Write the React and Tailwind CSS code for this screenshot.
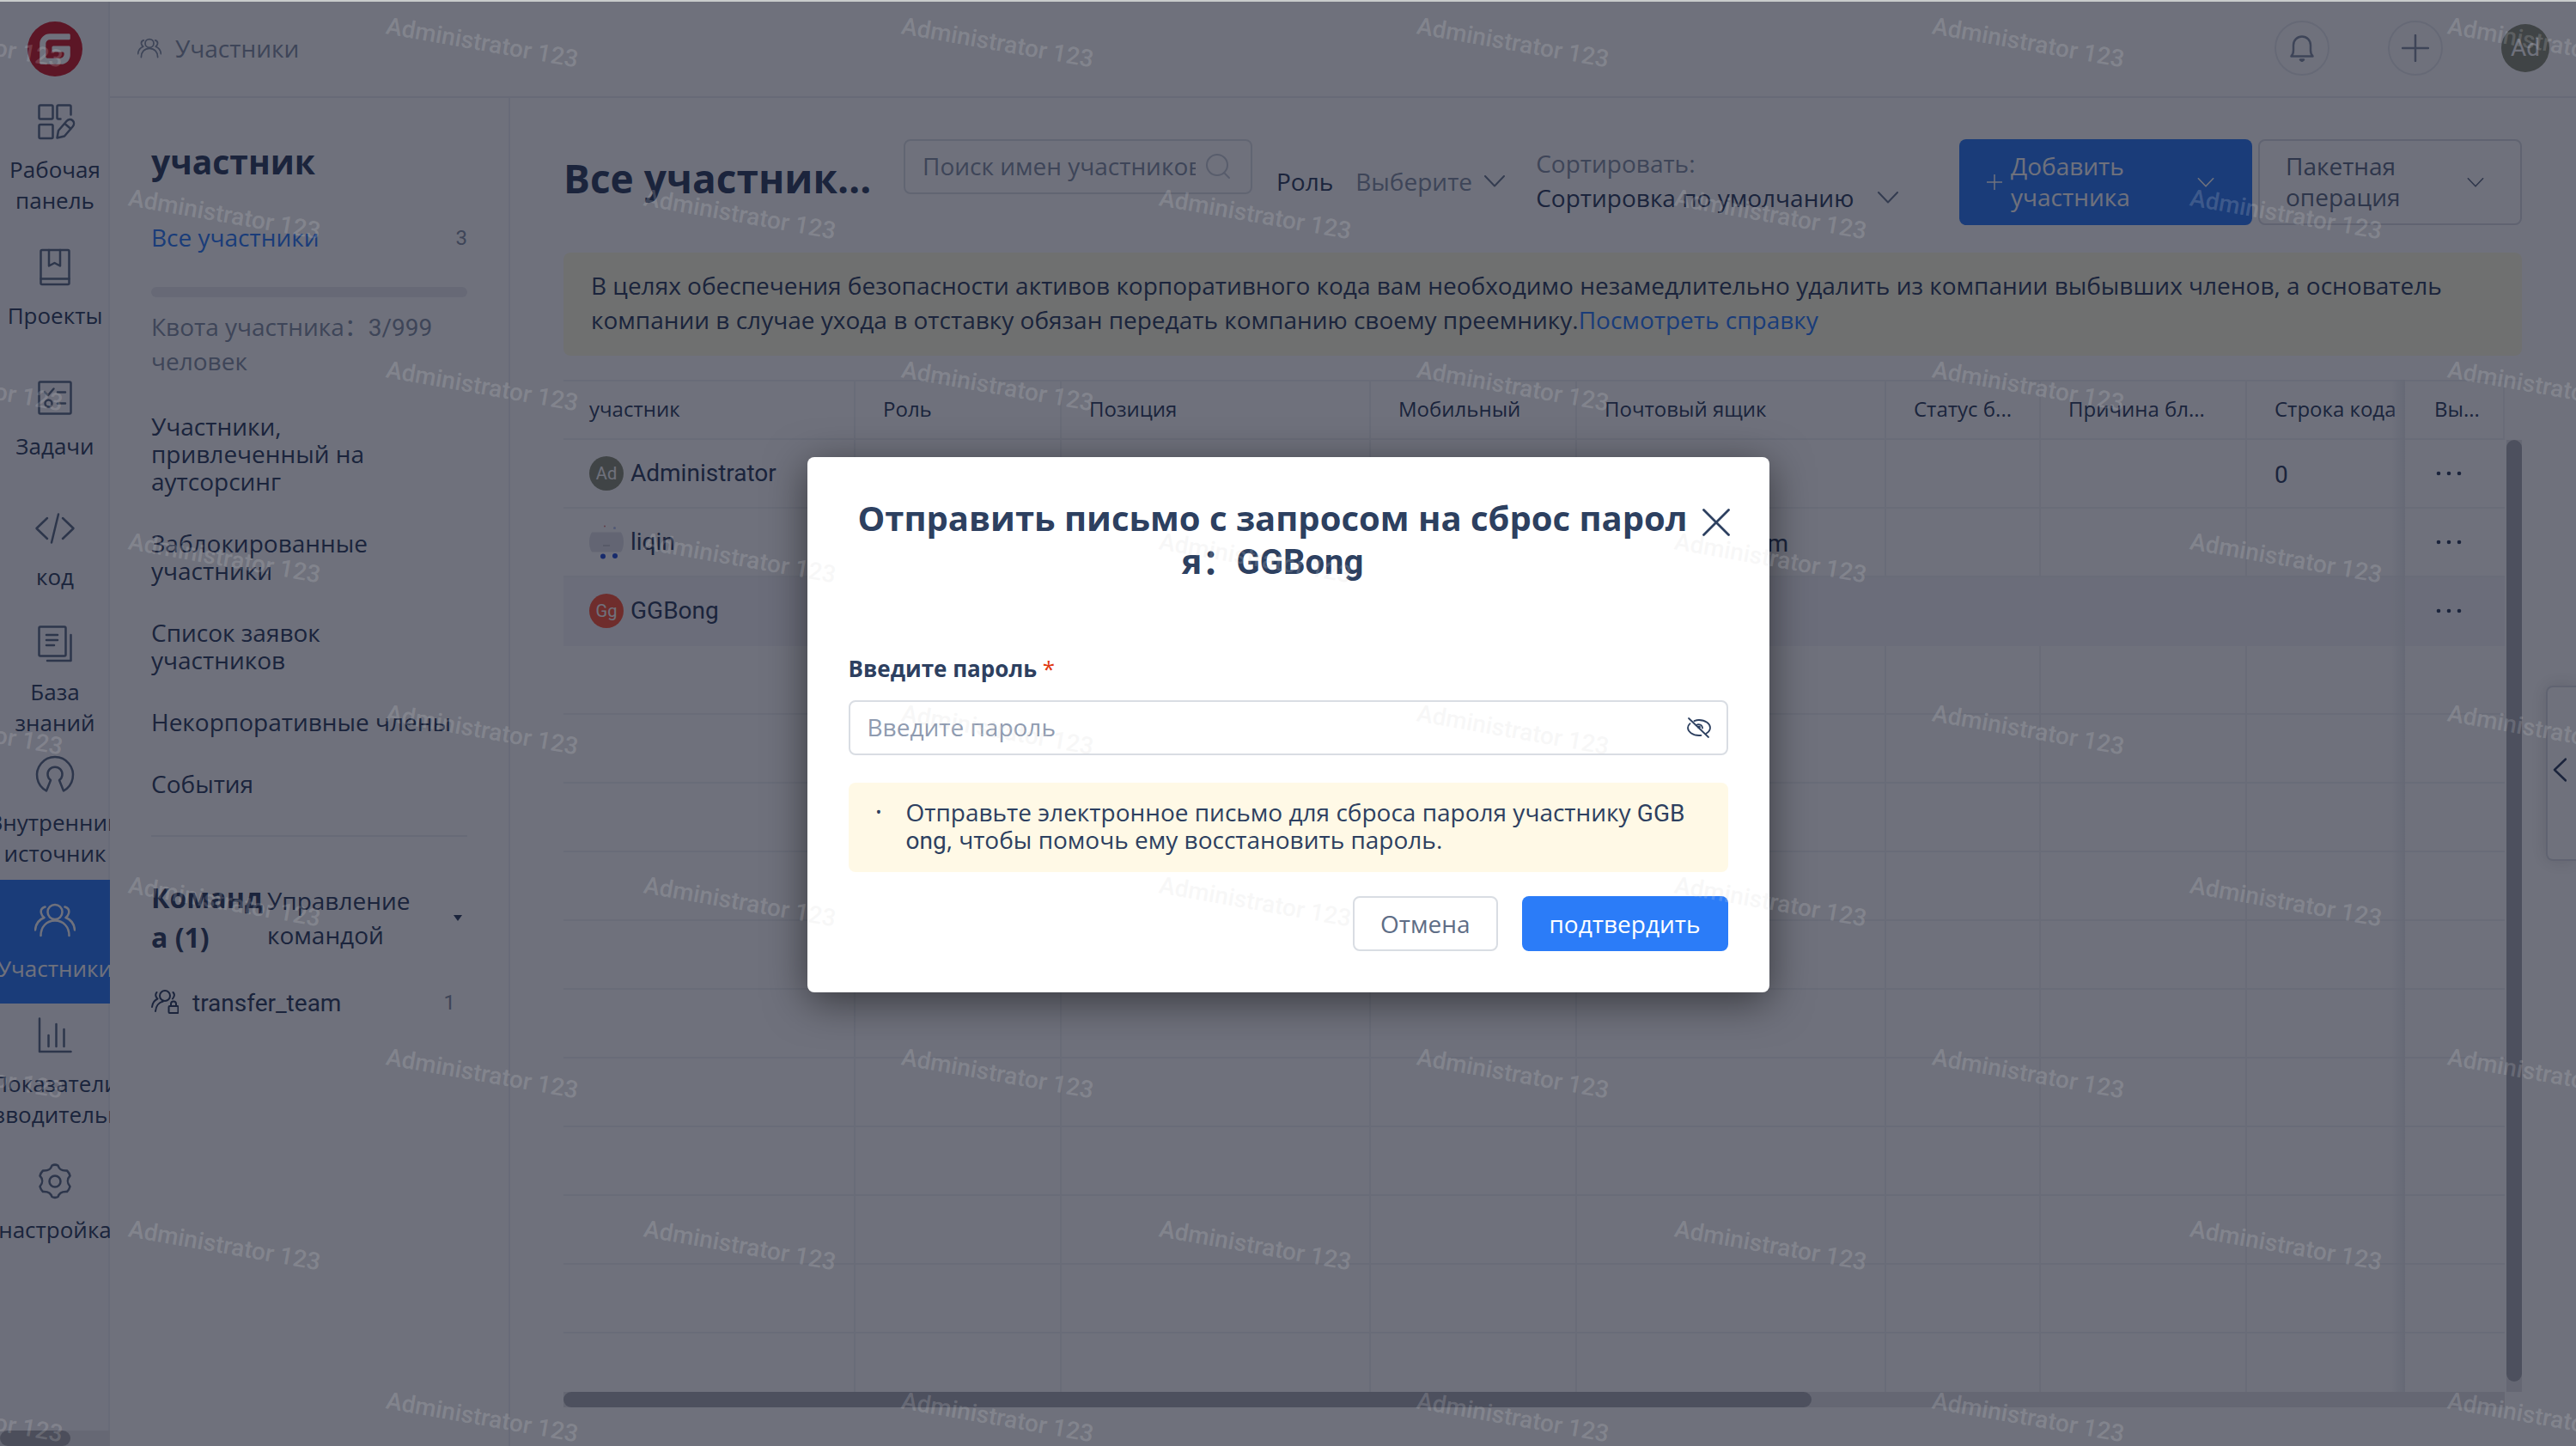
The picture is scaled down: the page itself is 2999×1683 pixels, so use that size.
import React from "react";
import { SiGitee } from "react-icons/si";

const stroke = { fill: "none", stroke: "currentColor", strokeLinecap: "round", strokeLinejoin: "round" };

function Latin({ children }) {
  return <span className="font-['Roboto',sans-serif] leading-none">{children}</span>;
}

/* ---------- icons ---------- */

function WorkspaceIcon() {
  return (
    <svg viewBox="0 0 48 48" className="size-12" {...stroke} strokeWidth="2.5">
      <rect x="5.5" y="5.5" width="16" height="16" rx="1.5" />
      <rect x="5.5" y="28" width="16" height="16" rx="1.5" />
      <path d="M30.500 21.500H28a1.500 1.500 0 0 1-1.500-1.500V7a1.500 1.500 0 0 1 1.500-1.500h13a1.500 1.500 0 0 1 1.500 1.500v9.500" />
      <path d="M26.500 43.500l1.500-8.500 9.500-11c2-2.300 5-2.500 7-.800s2 4.800.200 7l-9.700 11.300-8.500 2zM35.500 27l7 6" />
    </svg>
  );
}

function ProjectIcon() {
  return (
    <svg viewBox="0 0 48 48" className="size-12" {...stroke} strokeWidth="2.5">
      <rect x="7.500" y="4" width="33" height="40" rx="1.500" />
      <path d="M7.500 37.500h33M17 4v18.500l6.500-3.500 6.500 3.500V4" />
    </svg>
  );
}

function TaskIcon() {
  return (
    <svg viewBox="0 0 48 48" className="size-12" {...stroke} strokeWidth="2.5">
      <rect x="5.500" y="5.500" width="37" height="37" rx="1.500" />
      <path d="M12 17l4 4 6.500-7.500M27 17.500h9M27 30.500h9" />
      <circle cx="16.500" cy="30.500" r="4" />
    </svg>
  );
}

function CodeIcon() {
  return (
    <svg viewBox="0 0 48 48" className="size-12" {...stroke} strokeWidth="2.500">
      <path d="M15 12L2.500 24 15 36M33 12l12.500 12L33 36M28 7.500L20 40.500" />
    </svg>
  );
}

function DocsIcon() {
  return (
    <svg viewBox="0 0 48 48" className="size-12" {...stroke} strokeWidth="2.500">
      <rect x="5.500" y="4.500" width="31" height="34" rx="1.500" />
      <path d="M42.500 14v30H15M14 14h13M14 20h13M14 26h9" />
    </svg>
  );
}

function SourceIcon() {
  return (
    <svg viewBox="0 0 48 48" className="size-12" {...stroke} strokeWidth="2.500">
      <path d="M14 43.500A21 21 0 1 1 34 43.500L29 31a8.500 8.500 0 1 0-10 0z" />
    </svg>
  );
}

function MembersIcon({ className = "size-12", width = 2.5 }) {
  return (
    <svg viewBox="0 0 48 48" className={className} {...stroke} strokeWidth={width}>
      <circle cx="24" cy="14.500" r="8.500" />
      <path d="M7.500 42c0-10 6.500-17.500 16.500-17.500S40.500 32 40.500 42" />
      <path d="M12.500 8.500C9 9.500 7 12 8 16c.6 2.500 2 4 3.500 5-6.500 2.500-10 8-10.500 14.500M35.500 8.500c3.500 1 5.500 3.500 4.500 7.500-.6 2.500-2 4-3.500 5 6.500 2.500 10 8 10.500 14.500" />
    </svg>
  );
}

function ChartIcon() {
  return (
    <svg viewBox="0 0 48 48" className="size-12" {...stroke} strokeWidth="2.500">
      <path d="M6 4.500v38.500h36.500M16.500 24v13M25.500 11v26M34.500 17v20" />
    </svg>
  );
}

function GearIcon() {
  return (
    <svg viewBox="0 0 48 48" className="size-12" {...stroke} strokeWidth="2.500">
      <path d="M20.500 5.500c2-1 5-1 7 0 1.500 5 5 6.500 10.500 6 1.500 1.500 3 4 3.500 6-3.500 3.500-3.500 8.500 0 12.500-.5 2-2 4.500-3.500 6-5.500-.5-9 1-10.500 6-2 1-5 1-7 0-1.500-5-5-6.500-10.500-6-1.500-1.500-3-4-3.500-6 3.500-4 3.500-9 0-12.500.5-2 2-4.500 3.500-6 5.500.5 9-1 10.500-6z" />
      <circle cx="24" cy="24" r="6.500" />
    </svg>
  );
}

function Chevron({ className = "w-6 h-[14px]" }) {
  return (
    <svg viewBox="0 0 24 14" className={`${className} shrink-0 pointer-events-none`} {...stroke} strokeWidth="2">
      <path d="M1 1l11 11.500L23 1" />
    </svg>
  );
}

function EyeOffIcon() {
  return (
    <svg viewBox="0 0 28 24" className="w-7 h-6" {...stroke} strokeWidth="1.800">
      <path d="M2 1l23 22M8.500 4.200C10.200 3.500 12 3 14 3c7.500 0 13 4.500 13 9 0 2.500-1.700 4.800-4.300 6.500M16.500 20.800c-.8.100-1.600.2-2.500.2C6.500 21 1 16.500 1 12c0-1.700.9-3.400 2.500-4.900" />
      <path d="M11 9c2.500-2 7-.5 7 3.500M13 11.500a1 1 0 0 1 2 0" />
    </svg>
  );
}

/* ---------- left navigation ---------- */

const NAV = [
  { icon: WorkspaceIcon, lines: ["Рабочая", "панель"] },
  { icon: ProjectIcon, lines: ["Проекты"] },
  { icon: TaskIcon, lines: ["Задачи"] },
  { icon: CodeIcon, lines: ["код"] },
  { icon: DocsIcon, lines: ["База", "знаний"] },
  { icon: SourceIcon, lines: ["Внутренний", "источник"] },
  { icon: MembersIcon, lines: ["Участники"], active: true },
  { icon: ChartIcon, lines: ["Показатели", "производительности"] },
  { icon: GearIcon, lines: ["настройка"] },
];

function NavRail() {
  return (
    <nav className="flex w-32 shrink-0 flex-col overflow-hidden bg-[#fafafc] shadow-[inset_-2px_0_0_#eef0f4]">
      <a href="#home" aria-label="Главная" className="mx-auto mt-[25px] mb-[23px] block size-16 rounded-full bg-white text-[#d01c28]">
        <SiGitee className="size-16" />
      </a>
      <ul className="flex flex-1 flex-col gap-2">
        {NAV.map(({ icon: Icon, lines, active }) => (
          <li key={lines[0]}>
            <a
              href="#nav"
              className={
                active
                  ? "flex h-36 flex-col items-center justify-center gap-[14px] bg-[#2b7cf8] text-white"
                  : "flex h-36 flex-col items-center justify-center gap-[14px] text-[#2d4060]"
              }
            >
              <span className={active ? "text-white" : "text-[#5a6b85]"}>
                <Icon />
              </span>
              <span className="flex flex-col items-center whitespace-nowrap text-[26px] leading-9">
                {lines.map((l) => (
                  <span key={l}>{l}</span>
                ))}
              </span>
            </a>
          </li>
        ))}
      </ul>
      <div className="h-[18px] bg-[#e8e8ea]">
        <div className="h-full w-[82px] rounded-full bg-[#a8a9ad]" />
      </div>
    </nav>
  );
}

/* ---------- header ---------- */

function Header() {
  return (
    <header className="flex h-28 shrink-0 items-center border-b-2 border-[#eceef2] pr-[31px] pl-8 box-content">
      <MembersIcon className="size-7 text-[#8592a6]" width={3} />
      <span className="ml-4 text-[28px] leading-10 text-[#8592a6]">Участники</span>
      <div className="ml-auto flex items-center gap-[68px]">
        <button aria-label="Уведомления" className="flex size-16 items-center justify-center rounded-full border-2 border-[#e9ecf0] text-[#8592a6]">
          <svg viewBox="0 0 32 32" className="size-8" {...stroke} strokeWidth="2.500">
            <path d="M3.500 25.500h25c-2-2-2.500-4-2.500-7v-6a10 10 0 0 0-20 0v6c0 3-.5 5-2.500 7z" />
            <path d="M14 29.500h4l-2 1.500z" fill="currentColor" />
          </svg>
        </button>
        <button aria-label="Создать" className="flex size-16 items-center justify-center rounded-full border-2 border-[#e9ecf0] text-[#8592a6]">
          <svg viewBox="0 0 32 32" className="size-8" {...stroke} strokeWidth="2.500">
            <path d="M16 1v30M1 16h30" />
          </svg>
        </button>
        <button className="flex size-14 items-center justify-center rounded-full bg-[#8b9078] text-[28px] text-white">
          <Latin>Ad</Latin>
        </button>
      </div>
    </header>
  );
}

/* ---------- groups panel ---------- */

function GroupsPanel() {
  return (
    <aside className="flex w-[466px] shrink-0 flex-col border-r-2 border-[#eef0f4] px-12 pt-12">
      <h2 className="text-[39px] leading-[52px] font-bold text-[#2d4060]">участник</h2>
      <a href="#all" className="mt-[42px] flex items-center justify-between leading-10 text-[#2b7cf8]">
        <span className="text-[28px]">Все участники</span>
        <span className="text-2xl text-[#8592a6]">
          <Latin>3</Latin>
        </span>
      </a>
      <div className="mt-[38px] h-3 rounded-full bg-[#eaecf0]" />
      <p className="mt-[14px] text-[28px] leading-10 text-[#8592a6]">
        Квота участника：<Latin>3/999</Latin> человек
      </p>
      <ul className="mt-10 flex flex-col gap-10 text-[28px] leading-8 text-[#2d4060]">
        <li><a href="#o" className="block">Участники,<br />привлеченный на аутсорсинг</a></li>
        <li><a href="#b" className="block">Заблокированные участники</a></li>
        <li><a href="#r" className="block">Список заявок<br />участников</a></li>
        <li><a href="#n" className="block whitespace-nowrap">Некорпоративные члены</a></li>
        <li><a href="#e" className="block">События</a></li>
      </ul>
      <hr className="mt-11 border-t-2 border-[#eceef2]" />
      <div className="mt-12 flex items-center">
        <h3 className="w-[135px] shrink-0 text-[32px] leading-[46px] font-bold break-all text-[#2d4060]">Команда (1)</h3>
        <button className="flex flex-1 items-center justify-between pr-[6px] text-left text-[28px] leading-10 text-[#2d4060]">
          <span className="w-[180px]">Управление командой</span>
          <svg viewBox="0 0 10 7" className="h-[7px] w-[10px]" fill="currentColor">
            <path d="M0 0h10L5 7z" />
          </svg>
        </button>
      </div>
      <a href="#team" className="mt-8 flex items-center text-[#2d4060]">
        <svg viewBox="0 0 32 28" className="h-7 w-8" {...stroke} strokeWidth="2">
          <circle cx="16" cy="7" r="6" />
          <path d="M1 20c.5-4.500 3-8 6.500-9.500C5 8.500 4.500 5 6.500 3M25.500 3c2 2 1.500 5-.5 7.500M5 25c.5-6 4-10.500 9-11.500" />
          <rect x="20.500" y="19" width="11" height="8" rx="1" />
          <path d="M23 19v-2.500a3 3 0 0 1 6 0V19" />
        </svg>
        <span className="ml-4 text-[28px] leading-10"><Latin>transfer_team</Latin></span>
        <span className="mr-[14px] ml-auto text-2xl text-[#8592a6]"><Latin>1</Latin></span>
      </a>
    </aside>
  );
}

/* ---------- members toolbar + table ---------- */

function Toolbar() {
  return (
    <div className="flex items-start">
      <h1 className="w-[364px] shrink-0 truncate pt-[14px] text-[46px] leading-[62px] font-bold text-[#2d4060]">Все участники (3)</h1>
      <label className="ml-8 flex h-16 w-[406px] items-center rounded-lg border-2 border-[#dde1e6] pr-[22px] pl-5">
        <input
          type="text"
          aria-label="Поиск имен участников"
          placeholder="Поиск имен участников"
          className="w-[318px] bg-transparent pb-[2px] text-[28px] leading-10 outline-none placeholder:text-[#8592a6]"
        />
        <svg viewBox="0 0 32 32" className="ml-auto size-8 shrink-0 text-[#c6ccd6]" {...stroke} strokeWidth="2">
          <circle cx="15" cy="14" r="12" />
          <path d="M23 23l6 6" />
        </svg>
      </label>
      <div className="ml-7 flex items-center pt-[29px] text-[28px] leading-10">
        <label htmlFor="role" className="text-[#2d4060]">Роль</label>
        <select id="role" className="ml-[26px] w-[150px] appearance-none bg-transparent text-[#8592a6] outline-none">
          <option>Выберите</option>
        </select>
        <Chevron className="w-6 h-[14px] text-[#6b7b92]" />
      </div>
      <div className="ml-9 flex flex-col pt-2 text-[28px] leading-10">
        <label htmlFor="sort" className="text-[#8592a6]">Сортировать:</label>
        <span className="flex items-center">
          <select id="sort" className="w-[398px] appearance-none bg-transparent text-[#2d4060] outline-none">
            <option>Сортировка по умолчанию</option>
          </select>
          <Chevron className="w-6 h-[14px] text-[#6b7b92]" />
        </span>
      </div>
      <div className="ml-auto flex gap-[7px] text-[28px] leading-9">
        <button className="flex h-[100px] w-[341px] items-center rounded-lg bg-[#2b7cf8] pr-11 pl-8 text-left text-white">
          <svg viewBox="0 0 18 18" className="mr-[10px] size-[18px] shrink-0" {...stroke} strokeWidth="1.500">
            <path d="M9 0v18M0 9h18" />
          </svg>
          <span className="w-40 pb-[2px]">Добавить участника</span>
          <Chevron className="ml-auto h-[11px] w-5" />
        </button>
        <button className="flex h-[100px] w-[307px] items-center rounded-lg border-2 border-[#d9dde3] pr-[42px] pl-[30px] text-left text-[#5e6d86]">
          <span className="w-40 pb-[2px]">Пакетная операция</span>
          <Chevron className="ml-auto h-[11px] w-5" />
        </button>
      </div>
    </div>
  );
}

const MEMBERS = [
  {
    name: "Administrator",
    avatar: <span className="flex size-10 items-center justify-center rounded-full bg-[#8b9078] text-xl text-white"><Latin>Ad</Latin></span>,
    lines: "0",
  },
  {
    name: "liqin",
    mail: "m",
    avatar: (
      <svg viewBox="0 0 40 40" className="size-10">
        <path d="M3 8.500h34c4 6 4 17 0 23H3c-4-6-4-17 0-23z" fill="#e0e2e8" />
        <path d="M16 24h8" stroke="#b9bcc4" strokeWidth="1.500" />
        <circle cx="16" cy="36.500" r="3" fill="#2450d8" />
        <circle cx="30" cy="36" r="3" fill="#2450d8" />
        <circle cx="18" cy="1.500" r="1" fill="#e08080" />
        <circle cx="29.500" cy="3.500" r="1.500" fill="#b5c2f0" />
      </svg>
    ),
  },
  {
    name: "GGBong",
    active: true,
    avatar: <span className="flex size-10 items-center justify-center rounded-full bg-[#ff5538] text-xl text-white"><Latin>Gg</Latin></span>,
  },
];

const HEADS = ["участник", "Роль", "Позиция", "Мобильный", "Почтовый ящик", "Статус б...", "Причина бл...", "Строка кода", "Вы..."];
const WIDTHS = ["w-[340px]", "w-[240px]", "w-[360px]", "w-[240px]", "w-[360px]", "w-[180px]", "w-[240px]", "w-[184px]", "w-[116px]"];

function MembersTable() {
  return (
    <div className="mt-7 flex min-h-0 flex-1">
      <div className="flex min-w-0 flex-1 flex-col">
        <div className="relative min-h-0 flex-1 overflow-hidden">
          <table className="w-full table-fixed border-separate border-spacing-0 text-left">
            <colgroup>
              {WIDTHS.map((w, i) => (
                <col key={i} className={w} />
              ))}
            </colgroup>
            <thead>
              <tr className="h-[70px] text-2xl text-[#2d4060]">
                {HEADS.map((h) => (
                  <th key={h} className="border-t-2 border-r-2 border-b-2 border-[#f1f3f6] p-0 pb-[2px] pl-8 font-normal whitespace-nowrap first:pl-[30px] last:pl-[34px] nth-8:border-r-0">{h}</th>
                ))}
              </tr>
            </thead>
            <tbody className="text-[28px] text-[#2d4060]">
              {MEMBERS.map((m) => (
                <tr key={m.name} className={m.active ? "h-20 bg-[#f5f6f9] [&>td]:border-[#f5f6f9]" : "h-20"}>
                  <td className="border-r-2 border-b-2 border-[#f1f3f6] p-0 pl-[30px]">
                    <span className="flex items-center gap-2">
                      {m.avatar}
                      <Latin>{m.name}</Latin>
                    </span>
                  </td>
                  <td className="border-r-2 border-b-2 border-[#f1f3f6] p-0" />
                  <td className="border-r-2 border-b-2 border-[#f1f3f6] p-0" />
                  <td className="border-r-2 border-b-2 border-[#f1f3f6] p-0" />
                  <td className="border-r-2 border-b-2 border-[#f1f3f6] p-0 pr-28 text-right"><Latin>{m.mail}</Latin></td>
                  <td className="border-r-2 border-b-2 border-[#f1f3f6] p-0" />
                  <td className="border-r-2 border-b-2 border-[#f1f3f6] p-0" />
                  <td className="border-b-2 border-[#f1f3f6] p-0 pl-8"><Latin>{m.lines}</Latin></td>
                  <td className="border-b-2 border-[#f1f3f6] p-0 pl-9">
                    <button aria-label="Действия" className="block">
                      <svg viewBox="0 0 30 6" className="h-[6px] w-[30px]" fill="currentColor">
                        <circle cx="3" cy="3" r="2.300" />
                        <circle cx="15" cy="3" r="2.300" />
                        <circle cx="27" cy="3" r="2.300" />
                      </svg>
                    </button>
                  </td>
                </tr>
              ))}
              {Array.from({ length: 11 }, (_, r) => (
                <tr key={r} className="h-20">
                  {WIDTHS.map((_, c) => (
                    <td key={c} className="border-r-2 border-b-2 border-[#f1f3f6] p-0 nth-8:border-r-0 last:border-r-0" />
                  ))}
                </tr>
              ))}
            </tbody>
          </table>
          <div className="absolute inset-y-0 right-[116px] w-4 bg-linear-to-l from-[#e9ecf0] to-transparent" />
        </div>
        <div className="h-[18px] shrink-0 bg-[#e6e7e9]">
          <div className="h-full w-9/14 rounded-full bg-[#abadb3]" />
        </div>
      </div>
      <div className="mb-[18px] ml-[2px] flex w-[18px] flex-col border-t-2 border-[#f1f3f6] pt-[68px]">
        <div className="flex-1 bg-[#e6e7e9] pb-3">
          <div className="h-full rounded-full bg-[#abadb3]" />
        </div>
      </div>
    </div>
  );
}

function Members() {
  return (
    <main className="relative flex min-w-0 flex-1 flex-col pt-12 pr-[63px] pb-[45px] pl-[62px]">
      <Toolbar />
      <p className="mt-8 rounded-lg bg-[#fffde2] px-8 pt-[18px] pb-[22px] text-[28px] leading-10 text-[#2d4060]">
        В целях обеспечения безопасности активов корпоративного кода вам необходимо незамедлительно удалить из компании выбывших членов, а основатель компании в случае ухода в отставку обязан передать компанию своему преемнику.
        <a href="#help" className="text-[#2b7cf8]">Посмотреть справку</a>
      </p>
      <MembersTable />
      <button
        aria-label="Развернуть панель"
        className="absolute top-[684px] right-0 flex h-[204px] w-[35px] items-center rounded-l-lg border-2 border-r-0 border-[#d9dde3] bg-white pl-[6px] text-[#2d4060] shadow-[0_0_20px_rgba(0,0,0,0.15)]"
      >
        <svg viewBox="0 0 16 28" className="mb-[8px] h-7 w-4" {...stroke} strokeWidth="2.500">
          <path d="M15 1.500L2 14l13 12.500" />
        </svg>
      </button>
    </main>
  );
}

/* ---------- dialog ---------- */

function ResetDialog() {
  return (
    <div className="absolute inset-0 flex items-start justify-center bg-[#0f1225]/60 pt-[532px]">
      <form
        role="dialog"
        aria-labelledby="dialog-title"
        className="relative w-[1120px] rounded-lg bg-white px-12 pt-[46px] pb-12 text-[#2d4060] shadow-[0_10px_48px_rgba(0,0,0,0.5)]"
      >
        <h2 id="dialog-title" className="mx-2 mr-11 text-center text-[40px] leading-[50px] font-bold break-all">
          Отправить письмо с запросом на сброс пароля：<Latin>GGBong</Latin>
        </h2>
        <button type="button" aria-label="Закрыть" className="absolute top-[60px] right-[46px]">
          <svg viewBox="0 0 32 32" className="size-8" {...stroke} strokeWidth="2.800">
            <path d="M1.500 1.500l29 29M30.500 1.500l-29 29" />
          </svg>
        </button>
        <label htmlFor="password" className="mt-[82px] block text-[26px] leading-9 font-bold">
          Введите пароль <span className="font-normal text-[#e0380f]">*</span>
        </label>
        <div className="mt-[19px] flex h-16 items-center rounded-lg border-2 border-[#d9dde3] pr-[18px] pl-5">
          <input
            id="password"
            type="password"
            placeholder="Введите пароль"
            className="min-w-0 flex-1 pb-[2px] text-[28px] leading-10 outline-none placeholder:text-[#8f9bb0]"
          />
          <button type="button" aria-label="Показать пароль">
            <EyeOffIcon />
          </button>
        </div>
        <ul className="mt-8 rounded-lg bg-[#fff9e6] pt-[18px] pr-9 pb-[22px] pl-8 text-[28px] leading-8 break-all">
          <li className="flex">
            <span aria-hidden="true" className="w-[35px] shrink-0 text-lg leading-8 text-[#2d4060]">•</span>
            <span>
              Отправьте электронное письмо для сброса пароля участнику <Latin>GGBong</Latin>, чтобы помочь ему восстановить пароль.
            </span>
          </li>
        </ul>
        <div className="mt-7 flex justify-end gap-7 text-[28px] leading-10">
          <button type="button" className="h-16 rounded-lg border-2 border-[#d9dde3] px-[30px] text-[#5e6d86]">Отмена</button>
          <button type="submit" className="h-16 rounded-lg bg-[#2b7cf8] px-8 text-white">подтвердить</button>
        </div>
      </form>
    </div>
  );
}

function Watermark() {
  return (
    <div aria-hidden="true" className="pointer-events-none absolute inset-0 overflow-hidden select-none">
      <div className="-ml-[153px] grid auto-rows-[200px] grid-cols-[repeat(11,300px)]">
        {Array.from({ length: 99 }, (_, i) => (
          <span key={i} className="origin-bottom-left rotate-[10deg] self-start justify-self-start pt-[14px] font-['Roboto',sans-serif] text-[28px] leading-8 font-medium whitespace-nowrap text-[#d9d9d9]/20">
            {i % 2 === 0 ? "Administrator 123" : ""}
          </span>
        ))}
      </div>
    </div>
  );
}

export default function App() {
  return (
    <div className="relative flex h-screen overflow-hidden bg-white font-['Open_Sans','Noto_Sans_CJK_SC',sans-serif]">
      <NavRail />
      <div className="flex min-w-0 flex-1 flex-col">
        <Header />
        <div className="flex min-h-0 flex-1">
          <GroupsPanel />
          <Members />
        </div>
      </div>
      <ResetDialog />
      <Watermark />
      <div className="absolute inset-x-0 top-0 h-[2px] bg-[#c9cccb]" />
    </div>
  );
}
